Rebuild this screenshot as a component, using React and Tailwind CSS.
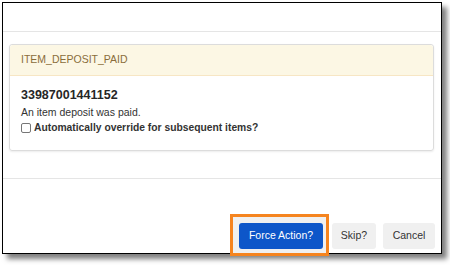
export default function App() {
  return (
    <div className="w-[450px] h-[265px] bg-white relative overflow-hidden" style={{ fontFamily: '"Liberation Sans", Arial, sans-serif' }}>
      <div className="ml-[2px] mt-[2px] w-[440px] h-[252px] border border-black bg-white flex flex-col shadow-[5px_5px_5px_rgba(0,0,0,0.5)]">
        <div className="h-[29px] border-b border-[#e5e5e5]" />
        <div className="pt-[12px] pl-[6px] pr-[7px] pb-[27px] border-b border-[#e5e5e5]">
          <div className="border border-[#dcdcdc] rounded-[3px] shadow-[0_1px_2px_rgba(0,0,0,0.08)]">
            <div className="h-[31px] bg-[#fcf7e4] border-b border-[#f7e6c4] rounded-t-[3px] flex items-center pl-[11px] text-[10.5px] text-[#8a6d3b]">
              ITEM_DEPOSIT_PAID
            </div>
            <div className="pt-[11px] pb-[15px] px-[11px] text-[#333]">
              <div className="h-[16px] leading-[16px] text-[12.5px] font-bold text-[#262626]">33987001441152</div>
              <div className="mt-[2px] h-[14px] leading-[14px] text-[10.5px]">An item deposit was paid.</div>
              <div className="mt-[2px] h-[14px] leading-[14px] text-[10.3px] font-bold flex items-center">
                <span className="inline-block w-[10px] h-[10px] border border-[#767676] rounded-[2px] mr-[3px] bg-white" />
                Automatically override for subsequent items?
              </div>
            </div>
          </div>
        </div>
        <div className="flex-1 flex items-end justify-end pr-[6px] pb-[4px] text-[10.5px]">
          <div className="relative">
            <div className="absolute -left-[9px] -top-[9px] w-[99px] h-[42px] border-[3px] border-[#f5841f] bg-[#d9d9d9]/40" />
            <button className="relative w-[84px] h-[26px] rounded-[3px] bg-[#0d56c9] text-white">Force Action?</button>
          </div>
          <button className="ml-[9px] w-[44px] h-[26px] rounded-[3px] bg-[#f0f0f0] text-[#333]">Skip?</button>
          <button className="ml-[7px] w-[52px] h-[26px] rounded-[3px] bg-[#f0f0f0] text-[#333]">Cancel</button>
        </div>
      </div>
    </div>
  );
}
